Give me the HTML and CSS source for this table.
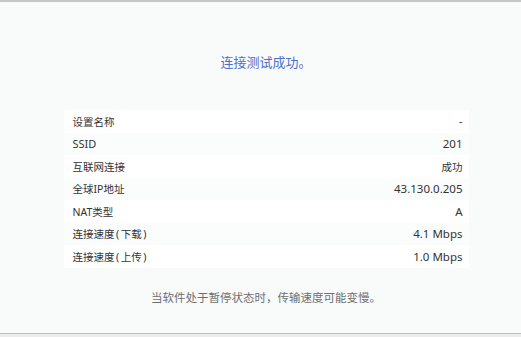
FILE: index.html
```html
<!DOCTYPE html>
<html lang="zh-CN">
<head>
<meta charset="utf-8">
<title>连接测试</title>
<link rel="stylesheet" href="styles.css">
</head>
<body>
<div class="page">
  <div class="top-bar"></div>
  <main class="content">
    <h1 class="title">连接测试成功。</h1>
    <div class="table">
      <div class="row"><span class="label">设置名称</span><span class="value">-</span></div>
      <div class="row"><span class="label latin">SSID</span><span class="value latin">201</span></div>
      <div class="row"><span class="label">互联网连接</span><span class="value">成功</span></div>
      <div class="row"><span class="label">全球IP地址</span><span class="value latin">43.130.0.205</span></div>
      <div class="row"><span class="label">NAT类型</span><span class="value latin">A</span></div>
      <div class="row"><span class="label">连接速度<span class="paren">(</span>下载<span class="paren">)</span></span><span class="value latin">4.1 Mbps</span></div>
      <div class="row"><span class="label">连接速度<span class="paren">(</span>上传<span class="paren">)</span></span><span class="value latin">1.0 Mbps</span></div>
    </div>
    <p class="note">当软件处于暂停状态时，传输速度可能变慢。</p>
  </main>
  <div class="bottom-bar"></div>
</div>
</body>
</html>
```
FILE: styles.css
```css
html, body {
  margin: 0;
  padding: 0;
}
body {
  background: #f9fafa;
  font-family: "Noto Sans", "Noto Sans CJK SC", sans-serif;
  color: #333;
}
.page {
  height: 337px;
  display: flex;
  flex-direction: column;
}
.top-bar {
  height: 2px;
  background: #c6c7c7;
}
.content {
  flex: 1;
  display: flex;
  flex-direction: column;
  align-items: center;
  padding: 51px 0 0 11px;
}
.title {
  margin: 0;
  font-size: 13px;
  line-height: 18px;
  font-weight: 400;
  color: #4a6fcf;
}
.table {
  margin-top: 39px;
  width: 405px;
  display: flex;
  flex-direction: column;
}
.row {
  height: 22.5px;
  display: flex;
  align-items: center;
  justify-content: space-between;
  padding: 0 6px 0 9px;
  font-size: 10.5px;
  background: #ffffff;
}
.row:nth-child(even) {
  background: #fbfcfc;
}
.value.latin {
  font-size: 11.5px;
}
.label.latin {
  font-size: 11px;
}
.paren {
  padding: 0 1.5px;
}
.note {
  margin: 22px 0 0;
  font-size: 11.5px;
  line-height: 16px;
  color: #6f6f6f;
}
.bottom-bar {
  height: 3px;
  border-top: 1px solid #bcbcbc;
  background: #ececec;
}
```
